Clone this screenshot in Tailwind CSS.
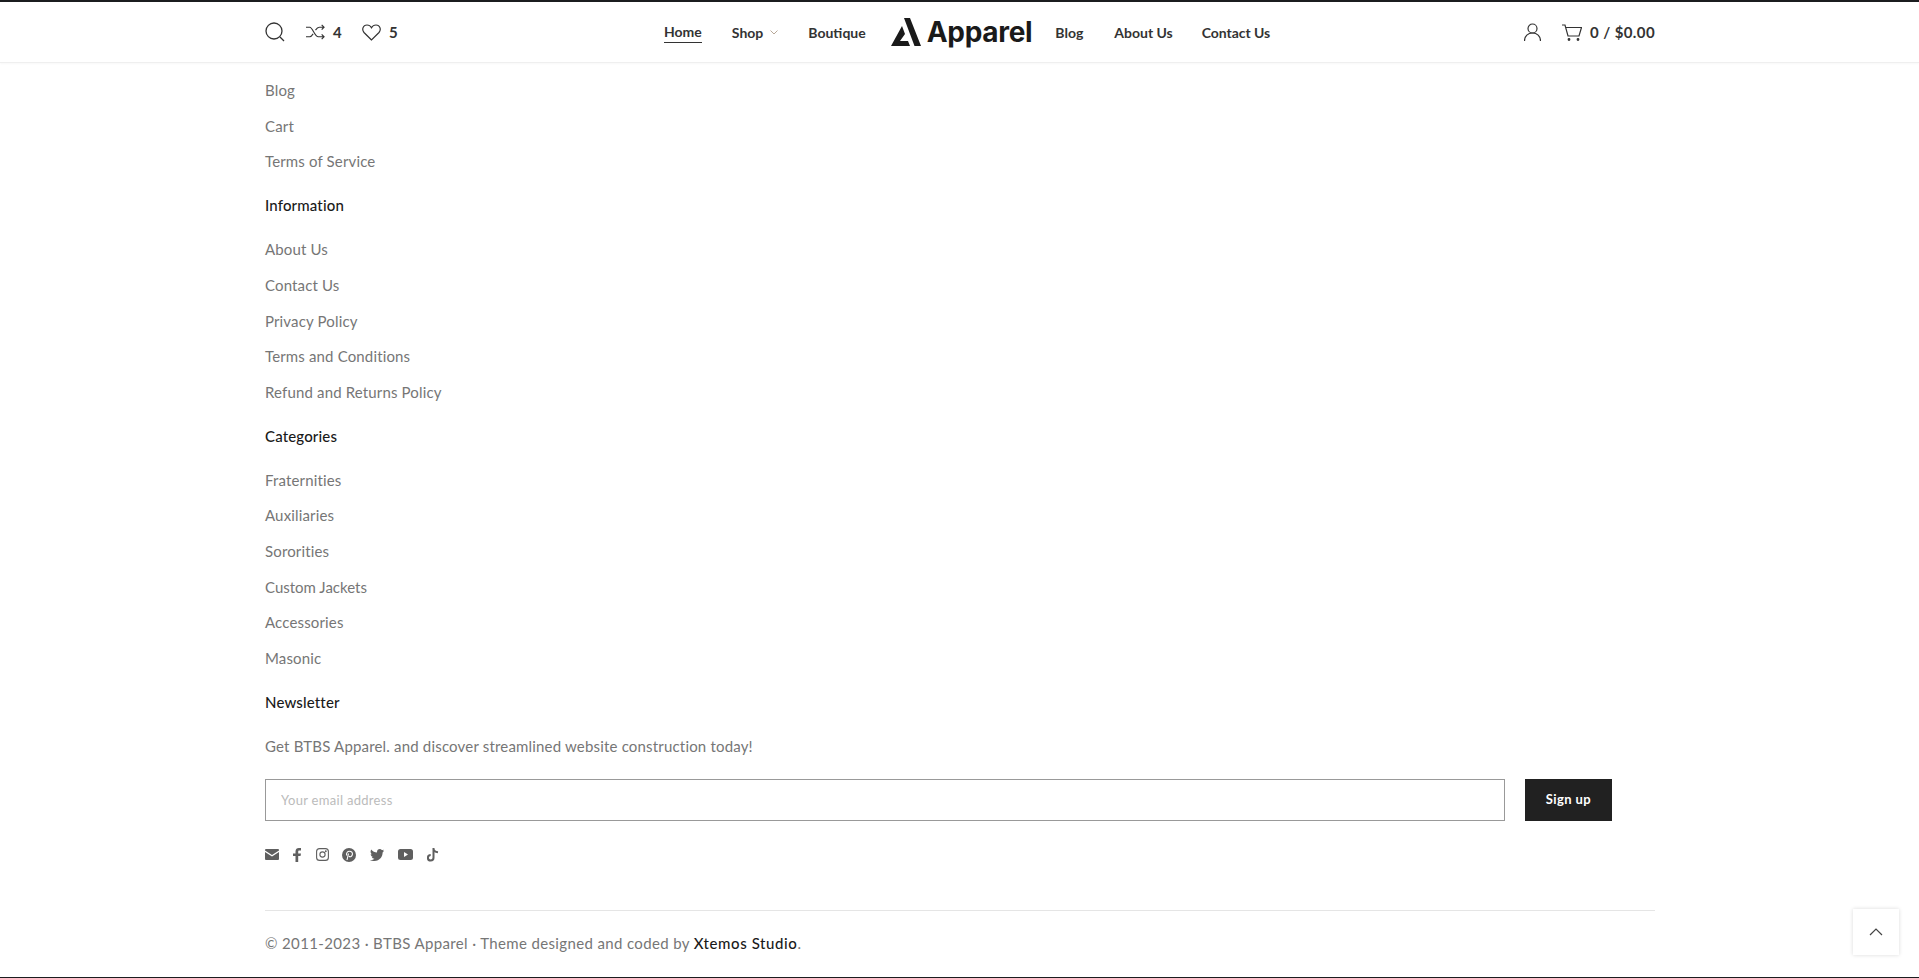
<!DOCTYPE html>
<html lang="en">
<head>
<meta charset="UTF-8">
<title>BTBS Apparel</title>
<script src="https://cdn.jsdelivr.net/npm/@tailwindcss/browser@4"></script>
</head>
<body class="relative h-[978px] overflow-hidden bg-white font-['Lato','Noto_Sans',sans-serif] text-[#767676]">
    <div class="h-[2px] bg-[#1b1d1f]"></div>

    <!-- header -->
    <header class="h-[61px] border-b border-[#efefef] shadow-[0_1px_2px_rgba(0,0,0,0.03)]">
        <div class="ml-[265px] flex h-full w-[1390px] items-center text-[#333] font-bold text-[14px]">
            <div class="flex w-[399px] items-center">
                <svg class="h-[20px] w-[20px]" viewBox="0 0 20 20" fill="none" stroke="#333" stroke-width="1.3"><circle cx="9" cy="9" r="8"/><path d="M15 15l4 4"/></svg>
                <svg class="ml-[21px] h-[16px] w-[19px]" viewBox="0 0 20 16" fill="none" stroke="#333" stroke-width="1.2"><path d="M0 3h4c3 0 5 10 9 10h6M0 13h4c1.500 0 2.500-1.500 3.500-3M10 6c1-1.500 2-3 4-3h5M16.500 .5L19 3l-2.500 2.500M16.500 10.500L19 13l-2.500 2.500"/></svg>
                <span class="ml-[8px] w-[10px] text-[15px]">4</span>
                <svg class="ml-[19px] h-[17px] w-[19px]" viewBox="0 0 19 17" fill="none" stroke="#333" stroke-width="1.2"><path d="M9.500 16L2 8.500C-.5 5.500 1 1 5 1c2 0 3.500 1 4.500 2.800C10.500 2 12 1 14 1c4 0 5.500 4.500 3 7.500z"/></svg>
                <span class="ml-[8px] text-[15px]">5</span>
            </div>
            <nav class="flex items-center text-[14px]">
                <a class="border-b border-[#333] leading-[20px]">Home</a>
                <a class="ml-[30px] flex items-center gap-[7px]">Shop
                    <svg class="h-[5px] w-[8px]" viewBox="0 0 8 5" fill="none" stroke="#b8a898"><path d="M.5 .5L4 4 7.500 .5"/></svg>
                </a>
                <a class="ml-[30px]">Boutique</a>
                <a class="ml-[25px] flex items-center gap-[6px] text-[#1a1a1a]">
                    <svg class="h-[30px] w-[30px]" viewBox="0 0 30 30" fill="#1a1a1a"><path d="M13 1h6l11 28h-6.500zM11 9l3 8-5 7h8l2 5H0z"/></svg>
                    <span class="font-['Inter',sans-serif] text-[28px] font-bold leading-none tracking-[-0.3px]">Apparel</span>
                </a>
                <a class="ml-[23px]">Blog</a>
                <a class="ml-[31px]">About Us</a>
                <a class="ml-[29px] tracking-[-0.05px]">Contact Us</a>
            </nav>
            <div class="ml-auto flex items-center">
                <svg class="h-[18px] w-[17px]" viewBox="0 0 17 18" fill="none" stroke="#333" stroke-width="1.2"><circle cx="8.500" cy="5.500" r="4.500"/><path d="M.5 18c0-5 3.500-8 8-8s8 3 8 8"/></svg>
                <svg class="ml-[21px] h-[17px] w-[20px]" viewBox="0 0 20 17" fill="none" stroke="#333" stroke-width="1.2"><path d="M0 1h3l3 11h11l2.500-8.500H4"/><circle cx="7" cy="15.500" r=".8" fill="#333"/><circle cx="16" cy="15.500" r=".8" fill="#333"/></svg>
                <span class="ml-[8px] text-[15px] tracking-[0.4px]">0 / $0.00</span>
            </div>
        </div>
    </header>

    <!-- footer links -->
    <main class="ml-[265px] w-[1390px] pt-[9.5px] text-[15px] tracking-[0.15px]">
        <ul>
            <li class="flex h-[35.7px] items-center">Blog</li>
            <li class="flex h-[35.7px] items-center">Cart</li>
            <li class="flex h-[35.7px] items-center">Terms of Service</li>
        </ul>
        <h3 class="flex h-[52px] items-center text-[15px] font-medium text-[#1a1a1a]">Information</h3>
        <ul>
            <li class="flex h-[35.7px] items-center">About Us</li>
            <li class="flex h-[35.7px] items-center">Contact Us</li>
            <li class="flex h-[35.7px] items-center">Privacy Policy</li>
            <li class="flex h-[35.7px] items-center">Terms and Conditions</li>
            <li class="flex h-[35.7px] items-center">Refund and Returns Policy</li>
        </ul>
        <h3 class="flex h-[52px] items-center text-[15px] font-medium text-[#1a1a1a]">Categories</h3>
        <ul>
            <li class="flex h-[35.7px] items-center">Fraternities</li>
            <li class="flex h-[35.7px] items-center">Auxiliaries</li>
            <li class="flex h-[35.7px] items-center">Sororities</li>
            <li class="flex h-[35.7px] items-center tracking-[0px]">Custom Jackets</li>
            <li class="flex h-[35.7px] items-center">Accessories</li>
            <li class="flex h-[35.7px] items-center">Masonic</li>
        </ul>
        <h3 class="flex h-[52px] items-center text-[15px] font-medium text-[#1a1a1a]">Newsletter</h3>
        <p class="flex h-[36px] items-center tracking-[0.18px]">Get BTBS Apparel. and discover streamlined website construction today!</p>

        <div class="mt-[14.5px] flex items-center gap-[20px]">
            <input class="h-[42px] w-[1240px] border border-[#999] px-[15px] text-[13px] tracking-[0.3px] placeholder:text-[#bbb]" placeholder="Your email address">
            <button class="h-[42px] w-[87px] bg-[#212121] text-[13px] font-bold tracking-[0.4px] text-white">Sign up</button>
        </div>

        <div class="mt-[26px] flex h-[16px] items-center text-[#5f5f5f]">
            <svg class="h-[11px] w-[14px]" viewBox="0 0 14 11" fill="#5f5f5f"><path d="M0 1q0-1 1-1h12q1 0 1 1v.6L7 6 0 1.600zM0 3l7 4.400L14 3v7q0 1-1 1H1q-1 0-1-1z"/></svg>
            <svg class="ml-[14px] h-[14px] w-[8px]" viewBox="0 0 8 14" fill="#5f5f5f"><path d="M2.500 14V8H0V5.500h2.500V3.500C2.500 1 4 0 5.800 0H8v2.500H6.500c-1 0-1.300.5-1.300 1.200v1.800H8L7.500 8H5.200v6z"/></svg>
            <svg class="ml-[15px] h-[13px] w-[13px]" viewBox="0 0 13 13" fill="none" stroke="#5f5f5f" stroke-width="1.100"><rect x=".6" y=".6" width="11.800" height="11.800" rx="3"/><circle cx="6.500" cy="6.500" r="2.600"/><circle cx="9.800" cy="3.200" r=".4"/></svg>
            <svg class="ml-[13px] h-[14px] w-[14px]" viewBox="0 0 14 14"><circle cx="7" cy="7" r="7" fill="#5f5f5f"/><path d="M5 12l1.500-6.500M4.800 7.500C3.800 5 5.500 3.300 7.500 3.300c2 0 3.200 1.400 2.900 3.100-.3 1.800-2 3-3.500 1.800" fill="none" stroke="#fff" stroke-width="1.100"/></svg>
            <svg class="ml-[14px] h-[12px] w-[14px]" viewBox="0 0 14 12" fill="#5f5f5f"><path d="M14 1.500c-.5.2-1 .4-1.600.5.600-.4 1-.9 1.200-1.600-.5.300-1.100.6-1.800.7C11.300.4 10.600 0 9.800 0 8.200 0 7 1.300 7 2.900c0 .2 0 .4.100.7C4.700 3.500 2.600 2.300 1.200.5 0 2.500.6 4.300 2 5.300c-.5 0-.9-.1-1.300-.4 0 1.500 1 2.600 2.300 2.900-.4.100-.8.100-1.300 0 .4 1.200 1.500 2 2.700 2C3.300 10.800 1.700 11.300 0 11c1.300.8 2.800 1 4.400 1 5.300 0 8.300-4.500 8.200-8.500.6-.4 1-1 1.400-2z"/></svg>
            <svg class="ml-[14px] h-[11px] w-[15px]" viewBox="0 0 15 11"><rect width="15" height="11" rx="2.500" fill="#5f5f5f"/><path d="M6 3l4 2.500L6 8z" fill="#fff"/></svg>
            <svg class="ml-[14px] h-[14px] w-[12px]" viewBox="0 0 12 14" fill="none" stroke="#5f5f5f" stroke-width="2"><path d="M6.500 0v9.800a2.800 2.800 0 1 1-2.800-2.800M6.500 .5c.2 2 1.700 3.500 4.500 3.800"/></svg>
        </div>

        <div class="mt-[47px] border-t border-[#e5e5e5] pt-[21px] text-[15px] tracking-[0.36px]">
            © 2011-2023 · BTBS Apparel · Theme designed and coded by <span class="font-medium tracking-[0.6px] text-[#1a1a1a]">Xtemos Studio</span>.
        </div>
    </main>

    <!-- scroll to top -->
    <button class="absolute left-[1853px] top-[909px] flex h-[46px] w-[46px] items-center justify-center bg-white shadow-[0_0_4px_rgba(0,0,0,0.15)]">
        <svg class="h-[8px] w-[14px]" viewBox="0 0 14 8" fill="none" stroke="#444" stroke-width="1.200"><path d="M1 7l6-6 6 6"/></svg>
    </button>

    <div class="absolute bottom-0 left-0 h-[1px] w-full bg-[#1b1d1f]"></div>
</body>
</html>
